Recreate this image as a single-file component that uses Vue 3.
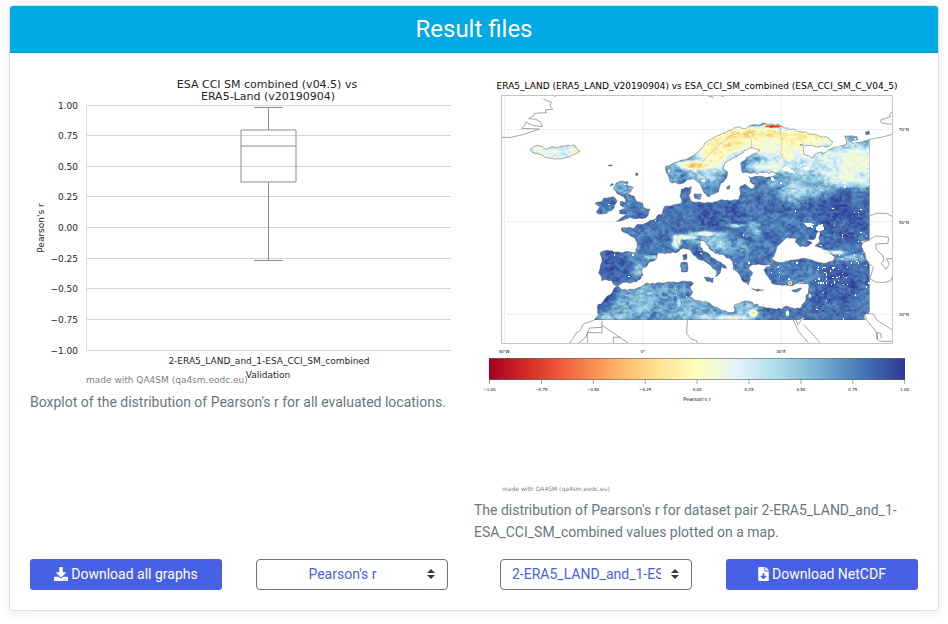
<script setup>
import { ref } from 'vue'

const metric = ref("Pearson's r")
const pair = ref('2-ERA5_LAND_and_1-ESA_CCI_SM_combined')

/* ---------- box plot ---------- */
const ticks = [1, 0.75, 0.5, 0.25, 0, -0.25, -0.5, -0.75, -1].map((v, i) => ({
  label: (v < 0 ? '\u2212' : '') + Math.abs(v).toFixed(2),
  y: Math.floor(105 + i * 30.65) + 0.5,
}))

/* ---------- colour scale (RdYlBu) ---------- */
const stops = ['#a50026', '#d73027', '#f46d43', '#fdae61', '#fee090', '#ffffbf', '#e0f3f8', '#abd9e9', '#74add1', '#4575b4', '#313695']
const rgb = stops.map((s) => [1, 3, 5].map((k) => parseInt(s.slice(k, k + 2), 16)))
function colour(u) {
  const t = Math.min(0.9999, Math.max(0, u)) * 10
  const i = Math.floor(t)
  const f = t - i
  return `rgb(${rgb[i].map((c, k) => Math.round(c + (rgb[i + 1][k] - c) * f)).join(',')})`
}
const barTicks = [-1, -0.75, -0.5, -0.25, 0, 0.25, 0.5, 0.75, 1].map((v, i) => ({
  label: (v < 0 ? '\u2212' : '') + Math.abs(v).toFixed(2),
  x: 489.5 + i * 51.9,
}))

/* ---------- map ---------- */
const shift = (pts, dx, dy) => pts.map(([x, y]) => [x + dx, y + dy])
const parse = (s) => s.trim().split(/\s+/).map((p) => p.split(',').map(Number))
const nw = (s) => parse(s)
const ne = (s) => shift(parse(s), 660, 0)
const sw = (s) => shift(parse(s), 0, 360)
const se = (s) => shift(parse(s), 660, 360)

/* splits long edges with small offsets so that coasts look ragged */
function rough(pts, amp = 3) {
  const out = []
  pts.forEach((p, i) => {
    const q = pts[(i + 1) % pts.length]
    out.push(p)
    const d = Math.hypot(q[0] - p[0], q[1] - p[1])
    if (d > 170 || p[1] === 750 || p[0] === 1169) return
    const n = Math.floor(d / 7)
    for (let k = 1; k < n; k++) {
      const o = (hash(p[0] + k * 3, p[1] + k * 7) - 0.5) * 2 * amp
      out.push([Math.round(p[0] + ((q[0] - p[0]) * k) / n - (o * (q[1] - p[1])) / d), Math.round(p[1] + ((q[1] - p[1]) * k) / n + (o * (q[0] - p[0])) / d)])
    }
  })
  return out
}
function hash(x, y) {
  let h = Math.imul(Math.round(x) + 7919, 0x9e3779b1)
  h = Math.imul(h ^ (h >>> 15), 0x85ebca6b)
  h = (h ^ (h >>> 13)) + Math.imul(Math.round(y) + 104729, 0x27d4eb2f)
  h = Math.imul(h ^ (h >>> 16), 0xc2b2ae35)
  h = Math.imul(h ^ (h >>> 14), 0x2c1b3c6d)
  return ((h ^ (h >>> 16)) >>> 0) / 4294967296
}
const toPath = (pts) => 'M' + pts.map((p) => p.join(' ')).join('L') + 'Z'

const continent = [
  ...nw('424,474 448,472 460,476 470,464 496,460 520,450 530,440 548,428 556,408 580,405 600,401 606,396 600,378 604,358 618,352 634,350 632,362 626,376 632,392 655,396 676,400'),
  ...ne('30,398 60,390 95,392 118,388 122,372 120,350 135,342 145,350 160,356 166,345 150,335 146,320 190,320 215,320 232,314 222,308 150,310 128,308 122,280 140,262 170,248 180,240 160,234 140,240 122,252 95,268 75,280 70,295 82,305 80,322 62,340 56,365 40,372 20,378'),
  ...nw('690,380 672,368 664,350 658,338 640,325 615,335 595,342 570,335 565,315 556,290 575,283 600,272 625,265 645,252 660,238 680,215 700,203 720,195'),
  ...ne('85,182 110,172 140,174 165,164 210,162 240,166 262,174 300,184 340,192 385,204 398,215 390,228 360,230 330,226 300,224 312,234 312,252 340,262 350,250 378,246 390,238 420,228 440,222 434,198 470,200 474,210 455,212 458,222 490,214 509,208'),
  ...se('509,150 488,158 484,170 495,190 500,210 509,225 509,366 494,374 495,390 310,390 318,372 306,384 298,390 282,390 276,376 280,390'),
  ...sw('343,390 355,375 352,350 372,330 395,310 402,295 412,288 425,300 465,298 495,282 540,278 600,276 632,274 640,280 630,290 638,305 628,320 650,332'),
  ...se('0,332 30,340 60,358 90,368 103,366 103,345 125,336 150,335 185,350 230,358 265,350 300,356 305,350 318,325 325,300 326,282 300,280 270,286 240,284 215,280 205,260 192,240 200,230 228,226 198,225 175,222 150,228 145,238 158,248 150,262 145,285 130,275 120,255 100,238 98,215 75,198 45,190 20,165 10,152 0,152 0,170 8,182 30,196 50,212 75,225 80,235 65,230 62,240 55,255 46,260 50,245'),
  ...sw('690,225 660,210 640,195 628,178 610,175 595,185 570,190 535,188 530,205 505,220 485,240 490,255 475,270 455,278 425,280 408,288 395,272 365,272 356,250 366,215 360,190 375,182 410,186 468,188 472,165 465,145 445,132 425,122'),
]
const blackSea = se('215,205 225,190 235,165 262,142 290,146 286,156 300,170 325,168 336,158 318,152 345,146 350,128 364,122 356,142 360,154 345,168 380,180 405,200 400,212 370,220 320,206 280,210 245,218 225,214')
const islands = [
  nw('150,238 160,231 172,226 188,230 196,238 215,230 235,232 250,228 285,226 292,238 300,243 285,252 262,262 225,268 195,262 180,254 158,248'),
  nw('408,340 420,334 445,336 440,346 460,352 452,366 440,372 462,378 470,395 488,400 490,412 510,418 505,434 495,444 470,446 450,442 430,450 410,454 430,440 440,432 418,430 418,422 436,415 420,404 422,394 438,398 432,380 412,372 400,356'),
  nw('345,400 365,395 372,384 400,380 410,390 402,415 380,430 355,432 348,425 360,410'),
  nw('642,372 664,372 660,388 644,384'),
  nw('386,285 396,285 396,288 386,288'),
  nw('467,310 474,310 473,316 467,316'),
  nw('390,346 398,340 400,344 392,348'),
  ne('80,352 90,346 88,356 82,358'),
  ne('496,187 508,183 510,192 498,194'),
  sw('672,262 700,264 698,278 680,274'),
  sw('603,218 622,218 622,245 604,245'),
  sw('608,196 620,192 620,208 610,210'),
  se('275,300 305,294 292,306 280,306'),
  se('155,296 190,300 172,304'),
]
const coast = [toPath(rough(continent)), toPath(rough(blackSea, 2)), ...islands.map((i) => toPath(rough(i, 2)))].join('')

/* local tendencies: x, y, x radius, y radius, colour position, strength */
const zones = [
  [225, 246, 90, 40, 0.52, 5], [172, 234, 14, 7, 0.3, 8], [285, 242, 12, 7, 0.34, 8], [220, 243, 18, 6, 0.36, 7], [255, 242, 16, 8, 0.7, 7],
  [640, 285, 34, 9, 0.3, 14], [592, 308, 24, 22, 0.78, 6], [700, 240, 40, 26, 0.4, 7], [665, 310, 36, 20, 0.58, 4],
  [745, 215, 46, 18, 0.35, 9], [700, 260, 30, 20, 0.4, 6], [820, 190, 76, 14, 0.33, 10], [880, 168, 20, 3, 0.05, 16], [950, 202, 60, 16, 0.34, 9],
  [1020, 214, 46, 12, 0.42, 8], [725, 275, 20, 26, 0.54, 4], [850, 228, 90, 20, 0.46, 6], [805, 275, 18, 20, 0.82, 6],
  [865, 288, 40, 14, 0.49, 7], [940, 245, 60, 24, 0.46, 6], [1000, 285, 70, 30, 0.57, 4], [1130, 265, 70, 36, 0.5, 7],
  [1110, 320, 60, 20, 0.5, 6], [1060, 280, 50, 30, 0.54, 4], [945, 360, 34, 24, 0.63, 5], [1010, 350, 60, 26, 0.7, 3],
  [1110, 225, 60, 10, 0.7, 5], [900, 335, 40, 18, 0.75, 3], [1062, 336, 4, 2, 0.25, 12], [700, 350, 34, 18, 0.84, 4],
  [430, 352, 22, 12, 0.74, 3], [588, 514, 8, 12, 0.44, 9], [615, 500, 22, 5, 0.5, 9], [675, 490, 30, 5, 0.5, 9],
  [690, 506, 40, 14, 0.7, 3], [515, 560, 14, 4, 0.6, 5], [475, 600, 14, 14, 0.7, 3], [395, 590, 34, 36, 0.98, 5],
  [765, 465, 22, 4, 0.64, 5], [822, 475, 14, 16, 0.7, 4], [725, 525, 24, 18, 0.7, 3], [775, 530, 22, 20, 0.75, 3],
  [905, 540, 10, 6, 0.7, 3], [1062, 546, 24, 4, 0.55, 8], [1110, 562, 40, 8, 0.72, 4], [1155, 514, 7, 2, 0.16, 14],
  [470, 700, 50, 36, 0.75, 6], [560, 690, 60, 36, 0.78, 6], [620, 715, 60, 30, 0.78, 6], [595, 700, 4, 8, 0.46, 9],
  [400, 738, 30, 10, 0.66, 5], [660, 740, 24, 6, 0.62, 8], [460, 695, 7, 5, 0.56, 5], [745, 744, 44, 8, 0.54, 9],
  [818, 728, 8, 8, 0.42, 9], [765, 746, 8, 3, 0.32, 10], [790, 715, 28, 18, 0.68, 4], [705, 715, 40, 20, 0.82, 4],
  [929, 638, 3, 3, 0.1, 14], [962, 638, 3, 2, 0.1, 14], [988, 676, 2, 3, 0.25, 12], [921, 728, 3, 5, 0.38, 9],
  [1090, 435, 70, 60, 0.96, 3], [1100, 640, 60, 60, 0.95, 3], [760, 425, 90, 26, 0.93, 3], [380, 670, 24, 20, 0.97, 5],
]
function smooth(x, y, s, seed) {
  const gx = x / s
  const gy = y / s
  const ix = Math.floor(gx)
  const iy = Math.floor(gy)
  const fx = gx - ix
  const fy = gy - iy
  const g = (a, b) => hash(a + seed, b + seed * 3)
  return (g(ix, iy) * (1 - fx) + g(ix + 1, iy) * fx) * (1 - fy) + (g(ix, iy + 1) * (1 - fx) + g(ix + 1, iy + 1) * fx) * fy - 0.5
}
const SIZE = 3
const SHADES = 44
function buildCells() {
  const paths = Array.from({ length: SHADES + 1 }, () => '')
  const scan = (x0, x1, y0, y1) => {
    for (let y = y0; y < y1; y += SIZE) {
      let start = x0
      let last = -1
      for (let x = x0; x < x1 + SIZE; x += SIZE) {
        let bucket = -1
        if (x < x1) {
          let sum = 0.895 * 1.4
          let weight = 1.4
          for (const [zx, zy, rx, ry, u, w] of zones) {
            const d = ((x - zx) / rx) ** 2 + ((y - zy) / ry) ** 2
            if (d > 7) continue
            const k = w * Math.exp(-d)
            sum += u * k
            weight += k
          }
          const mean = sum / weight
          const spread = mean > 0.85 ? 0.65 : 1
          const u = mean + spread * (smooth(x, y, 26, 11) * 0.12 + smooth(x, y * 1.4, 9, 47) * 0.17 + (hash(x, y) - 0.5) * 0.05)
          bucket = Math.round(Math.min(1, Math.max(0, u)) * (SHADES - 1))
          const holes = (x > 960 && y > 420 ? 0.012 : 0.002) + (x > 1010 && x < 1110 && y > 590 && y < 645 ? 0.07 : 0) + (x > 860 && x < 960 && y > 570 && y < 640 ? 0.02 : 0)
          if (hash((x >> 2) + 991, (y >> 2) + 77) < holes) bucket = SHADES
        }
        if (bucket !== last) {
          if (last >= 0) paths[last] += `M${start} ${y}h${x - start}v${SIZE}h${start - x}z`
          start = x
          last = bucket
        }
      }
    }
  }
  scan(144, 306, 219, 273)
  scan(339, 1170, 156, 750)
  return paths.map((d, i) => ({ d, fill: i === SHADES ? '#fff' : colour(i / (SHADES - 1)) }))
}
const cells = buildCells()

const lakes = [
  ne('248,294 262,290 282,304 284,312 264,306 252,302'),
  ne('310,292 326,288 330,298 318,302'),
  ne('212,322 220,320 222,332 216,334'),
  ne('310,458 334,462 340,474 322,470'),
  nw('664,330 672,328 676,334 666,338'),
  se('312,98 336,100 338,112 326,112'),
  se('350,108 368,102 372,118 356,126 348,120'),
].map(toPath).join('')

/* far coasts and borders that carry no data */
const outlines = [
  'M66 202L92 202L128 194L165 182L178 177L124 175L134 166L138 156L158 166L186 170L182 156L168 148L146 146L160 138L164 130L200 128L196 120L218 118L210 108L214 96L198 92L190 86M228 80L222 77M686 79L702 82M724 80L732 78',
  'M1237 124L1228 134L1232 140L1202 150L1204 158L1222 162L1237 162M1237 193L1204 202L1170 208',
  'M1169 437L1190 430L1220 430L1237 440',
  'M1170 508L1188 498L1226 502L1224 520L1186 522L1190 540L1208 556L1212 570L1204 580L1218 598L1228 582L1220 566L1237 566M1237 620L1232 632L1210 638L1186 636L1170 626L1180 592L1170 582',
  'M343 750L310 762L300 782L288 790L280 804L268 820M296 820L318 800L328 774L366 772M322 788L322 820M322 788L366 788L366 752M366 766L446 820M400 820L400 802L420 802M622 750L620 790L632 806L650 812L652 820',
  'M940 750L956 784L984 818M942 738L954 764L970 742M970 764L990 784L1020 818M1156 730L1180 732L1190 750L1237 780M1156 738L1162 754L1188 784L1192 808L1200 814L1237 814M1192 808L1192 788L1202 790L1204 806',
].join('')
const borders = [
  'M640 328L655 300L664 280L690 250L720 222L750 198L780 188M815 235L814 206L798 190L826 184M900 175L906 220L902 250L920 280L890 312',
  'M690 400L692 425L700 442L740 440L790 460L820 446L815 418L808 390L780 384M815 378L840 368L876 375L880 420L940 440L980 460',
  'M556 410L548 432L540 450L570 470L600 480L590 510L600 540M530 444L510 462M468 548L530 554M385 560L392 590L384 626',
  'M640 468L690 462L720 482L700 500L660 500M740 472L780 480L800 510L780 530M780 530L830 570L850 574L870 565M990 644L1020 630L1080 624L1110 600L1130 560M1080 624L1090 680L1040 700L990 720',
  'M600 640L594 672L606 700L590 730L598 750M650 692L620 720M480 648L476 690L430 706L366 750M850 700L852 750M1090 680L1150 740M1030 545L1070 560L1110 566',
].join('')
</script>

<template>
  <main class="page">
    <section class="card">
      <h1 class="card-header">Result files</h1>
      <div class="card-body">
        <div class="figures">
          <figure class="figure">
            <svg class="plot" viewBox="30 73 444 318" role="img" aria-label="Boxplot of Pearson's r">
              <g class="title" text-anchor="middle">
                <text x="267" y="88">ESA CCI SM combined (v04.5) vs</text>
                <text x="268" y="100">ERA5-Land (v20190904)</text>
              </g>
              <g class="tick">
                <template v-for="t in ticks" :key="t.label">
                  <path class="grid" :d="`M86 ${t.y}H451`" />
                  <text x="78" :y="t.y + 3" text-anchor="end">{{ t.label }}</text>
                </template>
              </g>
              <path class="spine" d="M86.5 105V351" />
              <path class="box" d="M241 130H296V182H241ZM241 146H296M268.500 130V107.500M268.500 182V260.500M254 107.500H283M254 260.500H283" />
              <g class="axis" text-anchor="middle">
                <text x="0" y="0" transform="translate(44 228) rotate(-90)">Pearson's r</text>
                <text x="269" y="364">2-ERA5_LAND_and_1-ESA_CCI_SM_combined</text>
                <text x="268" y="378">Validation</text>
              </g>
              <text class="credit" x="86" y="383">made with QA4SM (qa4sm.eodc.eu)</text>
            </svg>
            <figcaption>Boxplot of the distribution of Pearson's r for all evaluated locations.</figcaption>
          </figure>

          <figure class="figure">
            <svg class="plot" viewBox="474 73 444 426" role="img" aria-label="Map of Pearson's r">
              <defs>
                <clipPath id="land"><path :d="coast" clip-rule="evenodd" /></clipPath>
                <clipPath id="data"><rect x="66" y="78" width="1103" height="672" /></clipPath>
                <linearGradient id="scale">
                  <stop v-for="(s, i) in stops" :key="s" :offset="i / 10" :stop-color="s" />
                </linearGradient>
              </defs>
              <text class="map-title" x="697" y="89" text-anchor="middle">ERA5_LAND (ERA5_LAND_V20190904) vs ESA_CCI_SM_combined (ESA_CCI_SM_C_V04_5)</text>
              <path class="graticule" d="M504.500 96V343M642.500 96V343M781.500 96V343M502 129.500H892M502 221.500H892M502 314.500H892" />
              <g transform="translate(480 70) scale(.33333)">
                <g clip-path="url(#data)">
                  <path :d="coast" fill="#fff" fill-rule="evenodd" />
                  <g clip-path="url(#land)" shape-rendering="crispEdges">
                    <path v-for="(c, i) in cells" :key="i" :d="c.d" :fill="c.fill" />
                    <path :d="lakes" fill="#fff" />
                  </g>
                  <path class="border" :d="borders" />
                  <path class="coast" :d="coast" />
                </g>
                <path class="outline" :d="outlines" />
              </g>
              <path class="frame" d="M501.500 95.500H892.500V343.500H501.500Z" />
              <g class="tiny" text-anchor="middle">
                <text x="504" y="353">30°W</text>
                <text x="643" y="353">0°</text>
                <text x="781" y="353">30°E</text>
                <text x="904" y="131">70°N</text>
                <text x="904" y="224">50°N</text>
                <text x="904" y="316">30°N</text>
                <text v-for="t in barTicks" :key="t.label" :x="t.x" y="391">{{ t.label }}</text>
              </g>
              <rect x="489" y="358" width="416" height="22" fill="url(#scale)" />
              <path class="bar-line" d="M489 358.500H905M489 379.500H905" />
              <path v-for="t in barTicks" :key="t.x" class="bar-line" :d="`M${t.x} 380v4`" />
              <text class="bar-title" x="697" y="401" text-anchor="middle">Pearson's r</text>
              <text class="map-credit" x="502" y="491">made with QA4SM (qa4sm.eodc.eu)</text>
            </svg>
            <figcaption>The distribution of Pearson's r for dataset pair 2-ERA5_LAND_and_1-ESA_CCI_SM_combined values plotted on a map.</figcaption>
          </figure>
        </div>

        <div class="actions">
          <div class="pair">
            <button type="button" class="btn">
              <svg class="icon" viewBox="0 0 512 512" aria-hidden="true"><path d="M216 0h80c13.300 0 24 10.700 24 24v168h87.700c17.800 0 26.700 21.500 14.100 34.100L269.700 378.300c-7.500 7.500-19.800 7.500-27.300 0L90.100 226.100c-12.600-12.600-3.700-34.100 14.100-34.100H192V24c0-13.300 10.700-24 24-24zm296 376v112c0 13.300-10.700 24-24 24H24c-13.300 0-24-10.700-24-24V376c0-13.300 10.700-24 24-24h146.700l49 49c20.100 20.100 52.500 20.100 72.600 0l49-49H488c13.300 0 24 10.700 24 24zm-124 88c0-11-9-20-20-20s-20 9-20 20 9 20 20 20 20-9 20-20zm64 0c0-11-9-20-20-20s-20 9-20 20 9 20 20 20 20-9 20-20z" /></svg>
              Download all graphs
            </button>
            <div class="select">
              <select v-model="metric" aria-label="Metric">
                <option>Pearson's r</option>
              </select>
              <svg class="caret" viewBox="0 0 8 10" aria-hidden="true"><path d="M4 0L0 4h8zM4 10l4-4H0z" /></svg>
            </div>
          </div>
          <div class="pair">
            <div class="select">
              <select v-model="pair" aria-label="Dataset pair">
                <option>2-ERA5_LAND_and_1-ESA_CCI_SM_combined</option>
              </select>
              <svg class="caret" viewBox="0 0 8 10" aria-hidden="true"><path d="M4 0L0 4h8zM4 10l4-4H0z" /></svg>
            </div>
            <button type="button" class="btn">
              <svg class="icon narrow" viewBox="0 0 384 512" aria-hidden="true"><path d="M224 136V0H24C10.700 0 0 10.700 0 24v464c0 13.300 10.700 24 24 24h336c13.300 0 24-10.700 24-24V160H248c-13.200 0-24-10.800-24-24zm76.450 211.360l-96.420 95.700c-6.650 6.610-17.390 6.610-24.040 0l-96.420-95.700C73.420 337.290 80.540 320 94.820 320H160v-80c0-8.840 7.160-16 16-16h32c8.840 0 16 7.160 16 16v80h65.180c14.280 0 21.400 17.290 11.270 27.360zM377 105L279.100 7c-4.500-4.500-10.600-7-17-7H256v128h128v-6.100c0-6.300-2.500-12.400-7-16.900z" /></svg>
              Download NetCDF
            </button>
          </div>
        </div>
      </div>
    </section>
  </main>
</template>

<style>
body {
  background: #fff;
}
</style>

<style scoped>
.page {
  padding: 5px 9px 12px;
  font-family: Roboto, sans-serif;
  font-size: 14px;
  line-height: 22px;
  color: #6c757d;
}
.card {
  border: 1px solid #dfdfdf;
  border-radius: 4px;
  background: #fff;
  box-shadow: 0 2px 12px rgba(0, 0, 0, 0.08);
}
.card-header {
  margin: 0;
  padding: 8px 20px;
  border-bottom: 1px solid #0095cb;
  border-radius: 3px 3px 0 0;
  background: #00aae4;
  color: #fff;
  font-size: 24px;
  line-height: 30px;
  font-weight: 400;
  text-align: center;
}
.card-body {
  padding: 20px;
}
.figures {
  display: grid;
  grid-template-columns: 1fr 1fr;
}
.figure {
  margin: 0;
  min-width: 0;
}
.plot {
  display: block;
  width: 100%;
  height: auto;
  font-family: 'DejaVu Sans', sans-serif;
}
.title {
  font-size: 11px;
  fill: #262626;
}
.tick,
.axis {
  font-size: 9px;
  fill: #262626;
}
.credit {
  font-size: 9px;
  fill: #808080;
}
.grid {
  stroke: #d4d4d4;
}
.spine {
  stroke: #dcdcdc;
}
.box {
  fill: none;
  stroke: #8c8c8c;
}
.map-title {
  font-size: 9px;
  fill: #000;
}
.graticule {
  stroke: #ececec;
  stroke-dasharray: 3 1;
}
.frame {
  fill: none;
  stroke: #c4c4c4;
}
.coast {
  fill: none;
  stroke: #555;
  stroke-width: 2;
  opacity: 0.7;
}
.border {
  fill: none;
  stroke: #333;
  stroke-width: 2;
  opacity: 0.3;
}
.outline {
  fill: none;
  stroke: #777;
  stroke-width: 2;
}
.tiny {
  font-size: 4px;
  fill: #000;
}
.bar-line {
  stroke: #666;
  opacity: 0.6;
}
.bar-title {
  font-size: 5px;
  fill: #000;
}
.map-credit {
  font-size: 6px;
  fill: #808080;
}
.actions {
  display: grid;
  grid-template-columns: 1fr 1fr;
  gap: 52px;
  margin-top: 16px;
}
.pair {
  display: grid;
  grid-template-columns: 1fr 1fr;
  gap: 34px;
}
.btn {
  display: flex;
  align-items: center;
  justify-content: center;
  gap: 3px;
  height: 31px;
  padding: 0 12px 2px;
  border: 0;
  border-radius: 3px;
  background: #4860e6;
  color: #fff;
  font: inherit;
  white-space: nowrap;
}
.icon {
  width: 14px;
  height: 14px;
  fill: currentColor;
}
.icon.narrow {
  width: 11px;
}
.select {
  position: relative;
  min-width: 0;
}
.select select {
  display: block;
  width: 100%;
  height: 31px;
  padding: 0 30px 2px 11px;
  border: 1px solid #6c757d;
  border-radius: 4px;
  background: #fff;
  color: #4860e6;
  font: inherit;
  text-align: center;
  text-align-last: center;
  appearance: none;
}
.caret {
  position: absolute;
  top: 10px;
  right: 13px;
  width: 8px;
  height: 10px;
  fill: #343a40;
  pointer-events: none;
}
</style>
